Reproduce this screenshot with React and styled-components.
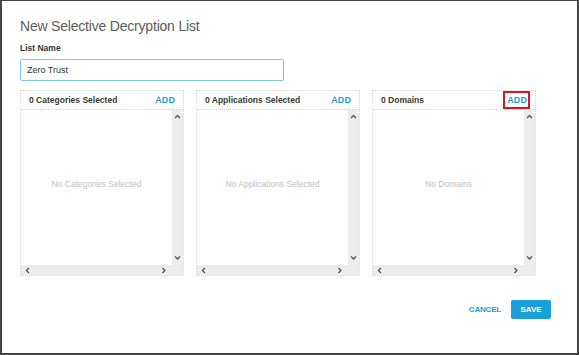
import React from "react";
import styled, { createGlobalStyle } from "styled-components";

const Global = createGlobalStyle`
  html, body { margin: 0; padding: 0; background: #fff; }
  body { font-family: "Liberation Sans", Arial, sans-serif; }
  * { box-sizing: border-box; }
`;

const Frame = styled.div`
  width: 579px;
  height: 355px;
  border: 2px solid #454545;
  border-top-width: 1px;
  background: #fff;
  padding: 17px 0 0 18px;
  display: flex;
  flex-direction: column;
`;

const Title = styled.h1`
  margin: 0;
  font-size: 14px;
  line-height: 16px;
  font-weight: 400;
  color: #5b5b5b;
  letter-spacing: -0.2px;
`;

const Label = styled.div`
  margin-top: 9px;
  font-size: 8.5px;
  font-weight: 700;
  color: #333;
  line-height: 10px;
`;

const Input = styled.div`
  margin-top: 6px;
  width: 264px;
  height: 22px;
  border: 1px solid #7ccbe6;
  border-radius: 2px;
  padding: 0 6px;
  display: flex;
  align-items: center;
  font-size: 9px;
  color: #333;
`;

const Panels = styled.div`
  margin-top: 9px;
  display: grid;
  grid-template-columns: repeat(3, 164px);
  column-gap: 12px;
`;

const Panel = styled.div`
  height: 186px;
  border: 1px dotted #d4d4d4;
  display: flex;
  flex-direction: column;
`;

const Header = styled.div`
  height: 19px;
  flex: none;
  border-bottom: 1px dotted #d4d4d4;
  display: flex;
  align-items: center;
  justify-content: space-between;
  padding: 0 8px 0 8px;
`;

const HeaderText = styled.span`
  font-size: 8.5px;
  font-weight: 700;
  color: #3a3a3a;
`;

const AddLink = styled.span`
  position: relative;
  font-size: 9px;
  font-weight: 700;
  color: #1ba0d7;
  letter-spacing: 0.1px;
  ${(p) =>
    p.$highlight &&
    `
    &::after {
      content: "";
      position: absolute;
      left: -4px;
      right: -3px;
      top: -4px;
      bottom: -4px;
      border: 2px solid #e0141e;
    }
  `}
`;

const Body = styled.div`
  flex: 1;
  display: grid;
  grid-template-columns: 1fr 11px;
  grid-template-rows: 1fr 10px;
`;

const Content = styled.div`
  display: flex;
  align-items: center;
  justify-content: center;
  padding-bottom: 8px;
  font-size: 8.5px;
  color: #c2c2c2;
`;

const VScroll = styled.div`
  grid-row: 1 / 3;
  grid-column: 2;
  background: #ececec;
  display: flex;
  flex-direction: column;
  justify-content: space-between;
  align-items: center;
  padding: 4px 0 14px;
`;

const HScroll = styled.div`
  grid-row: 2;
  grid-column: 1;
  background: #ececec;
  display: flex;
  justify-content: space-between;
  align-items: center;
  padding: 0 5px 0 4px;
`;

const Footer = styled.div`
  margin-top: 24px;
  padding-right: 26px;
  display: flex;
  justify-content: flex-end;
  align-items: center;
  gap: 10px;
`;

const Cancel = styled.span`
  font-size: 8px;
  font-weight: 700;
  color: #1ba0d7;
  letter-spacing: -0.2px;
`;

const Save = styled.span`
  width: 40px;
  height: 19px;
  border-radius: 2px;
  background: #1a9fd8;
  color: #fff;
  font-size: 8px;
  font-weight: 700;
  display: flex;
  align-items: center;
  justify-content: center;
`;

const Chevron = ({ dir }) => {
  const paths = {
    up: "M1 4 L3.5 1.5 L6 4",
    down: "M1 1.5 L3.5 4 L6 1.5",
    left: "M4 1 L1.5 3.5 L4 6",
    right: "M1.5 1 L4 3.5 L1.5 6",
  };
  const vertical = dir === "up" || dir === "down";
  return (
    <svg
      width={vertical ? 7 : 6}
      height={vertical ? 6 : 7}
      viewBox={vertical ? "0 0 7 6" : "0 0 6 7"}
    >
      <path d={paths[dir]} fill="none" stroke="#555" strokeWidth="1.3" />
    </svg>
  );
};

const panels = [
  { title: "0 Categories Selected", empty: "No Categories Selected" },
  { title: "0 Applications Selected", empty: "No Applications Selected" },
  { title: "0 Domains", empty: "No Domains", highlight: true },
];

export default function App() {
  return (
    <>
      <Global />
      <Frame>
        <Title>New Selective Decryption List</Title>
        <Label>List Name</Label>
        <Input>Zero Trust</Input>
        <Panels>
          {panels.map((p) => (
            <Panel key={p.title}>
              <Header>
                <HeaderText>{p.title}</HeaderText>
                <AddLink $highlight={p.highlight}>ADD</AddLink>
              </Header>
              <Body>
                <Content>{p.empty}</Content>
                <VScroll>
                  <Chevron dir="up" />
                  <Chevron dir="down" />
                </VScroll>
                <HScroll>
                  <Chevron dir="left" />
                  <Chevron dir="right" />
                </HScroll>
              </Body>
            </Panel>
          ))}
        </Panels>
        <Footer>
          <Cancel>CANCEL</Cancel>
          <Save>SAVE</Save>
        </Footer>
      </Frame>
    </>
  );
}
